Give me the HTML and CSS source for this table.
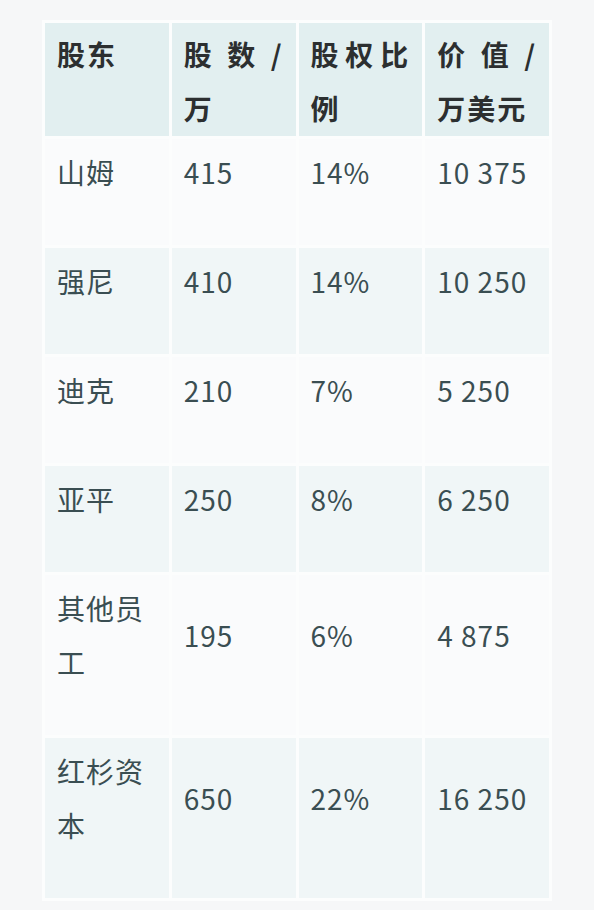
FILE: index.html
```html
<!DOCTYPE html>
<html lang="zh-CN">
<head>
<meta charset="utf-8">
<title>股权结构</title>
<link rel="stylesheet" href="styles.css">
</head>
<body>
<table class="equity">
  <thead>
    <tr>
      <th>股东</th>
      <th>股数/万</th>
      <th>股权比例</th>
      <th>价值/万美元</th>
    </tr>
  </thead>
  <tbody>
    <tr class="odd"><td>山姆</td><td>415</td><td>14%</td><td>10 375</td></tr>
    <tr class="even"><td>强尼</td><td>410</td><td>14%</td><td>10 250</td></tr>
    <tr class="odd"><td>迪克</td><td>210</td><td>7%</td><td>5 250</td></tr>
    <tr class="even"><td>亚平</td><td>250</td><td>8%</td><td>6 250</td></tr>
    <tr class="odd"><td>其他员工</td><td>195</td><td>6%</td><td>4 875</td></tr>
    <tr class="even"><td>红杉资本</td><td>650</td><td>22%</td><td>16 250</td></tr>
  </tbody>
</table>
</body>
</html>
```

FILE: styles.css
```css
html, body {
  margin: 0;
  padding: 0;
  background: #f6f7f8;
}

body {
  padding: 20px 42px 0;
  font-family: "Noto Sans CJK SC", "Noto Sans", sans-serif;
  font-size: 28px;
  line-height: 54px;
}

.equity {
  width: 510px;
  table-layout: fixed;
  border-collapse: separate;
  border-spacing: 3px;
  background: #fcfdfd;
}

.equity th {
  background: #e2eff0;
  color: #2c2f30;
  font-weight: 700;
  letter-spacing: 2px;
  text-align: justify;
  vertical-align: top;
  padding: 4px 12px 1px;
}

.equity td {
  color: #3a4e52;
  font-weight: 400;
  letter-spacing: 1px;
  text-align: left;
  vertical-align: middle;
  padding: 6px 12px 46px;
}

.equity .odd td {
  background: #fafbfc;
}

.equity .even td {
  background: #f0f6f7;
}
```
